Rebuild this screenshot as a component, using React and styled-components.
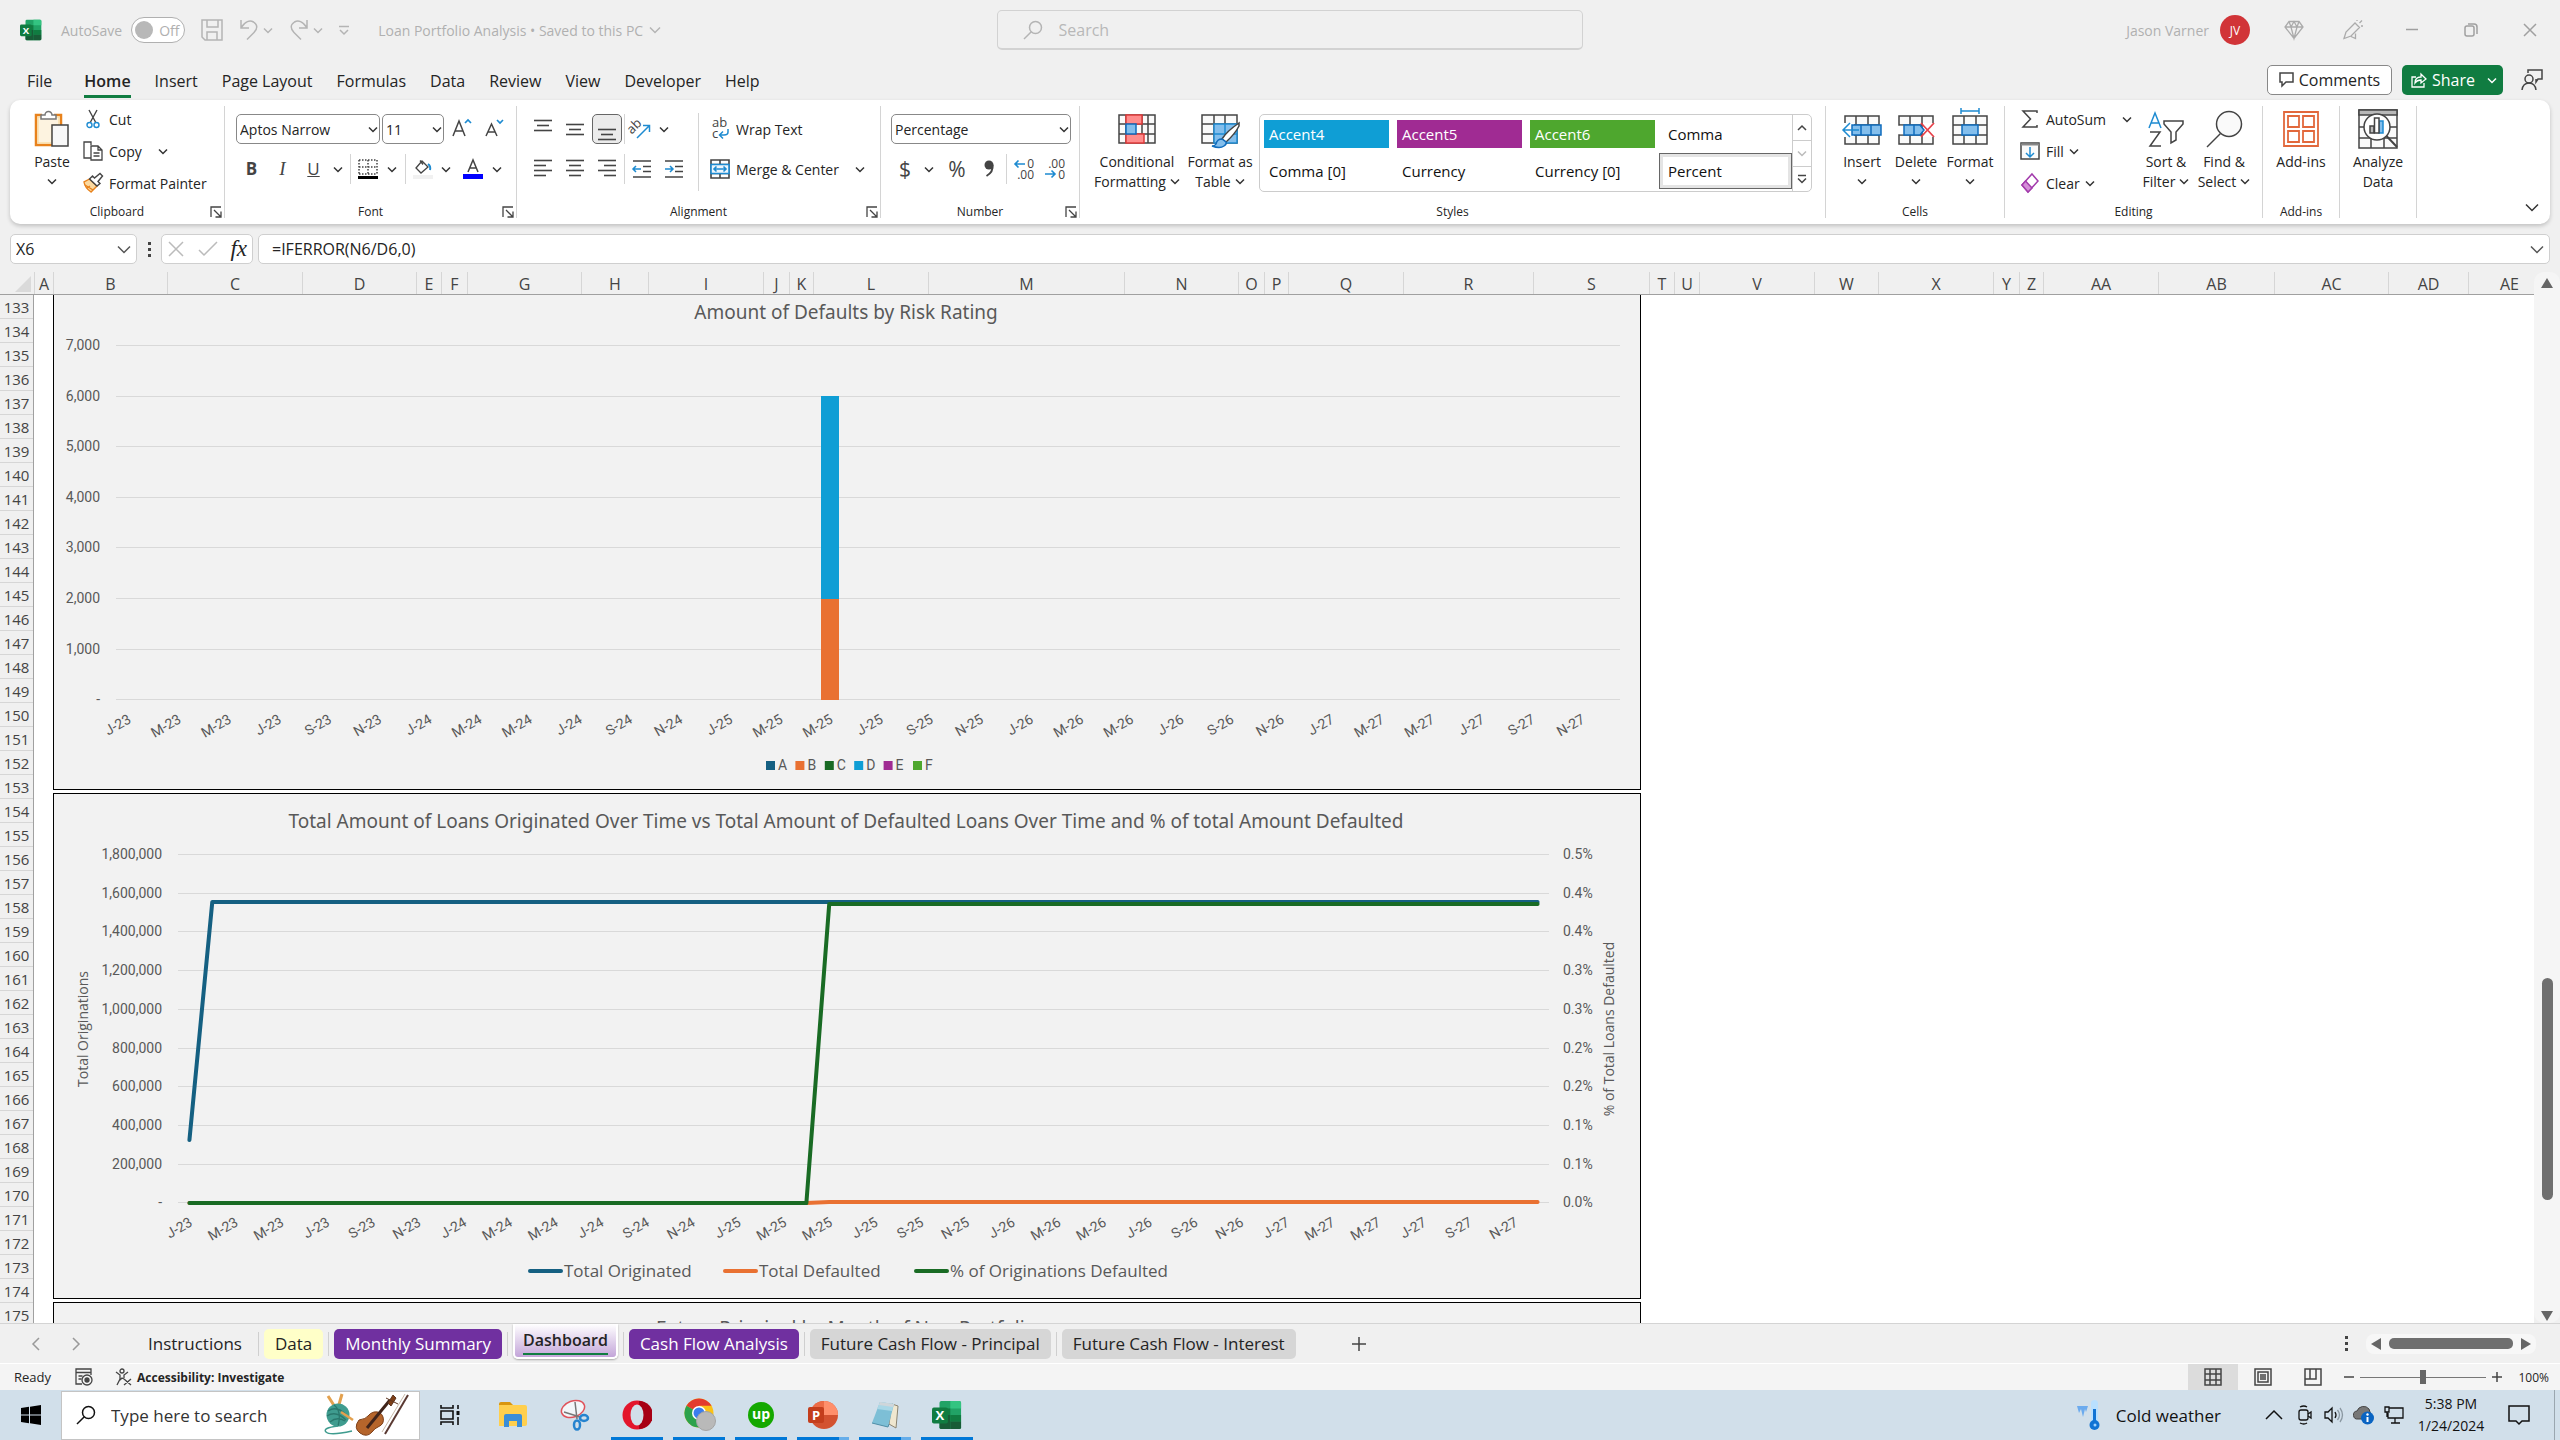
import React, { useState } from 'react';
import styled, { createGlobalStyle } from 'styled-components';

const BLUE = '#1e8bd1';
const INK = '#444';

const columns = [
  ['A', 19], ['B', 114], ['C', 135], ['D', 114], ['E', 25], ['F', 26], ['G', 114], ['H', 67],
  ['I', 115], ['J', 26], ['K', 24], ['L', 115], ['M', 196], ['N', 114], ['O', 26], ['P', 24],
  ['Q', 115], ['R', 130], ['S', 116], ['T', 25], ['U', 25], ['V', 115], ['W', 64], ['X', 115],
  ['Y', 26], ['Z', 24], ['AA', 115], ['AB', 116], ['AC', 114], ['AD', 80], ['AE', 82],
];

const rows = Array.from({ length: 43 }, (_, i) => 133 + i);

const months = [];
['23', '24', '25', '26', '27'].forEach((year) => {
  ['J', 'M', 'M', 'J', 'S', 'N'].forEach((m) => months.push(`${m}-${year}`));
});

const ribbonTabs = ['File', 'Home', 'Insert', 'Page Layout', 'Formulas', 'Data', 'Review', 'View', 'Developer', 'Help'];

const cellStyles = [
  { name: 'Accent4', color: '#0f9ed5' },
  { name: 'Accent5', color: '#a02b93' },
  { name: 'Accent6', color: '#4ea72e' },
  { name: 'Comma' },
  { name: 'Comma [0]' },
  { name: 'Currency' },
  { name: 'Currency [0]' },
  { name: 'Percent', selected: true },
];

const riskLegend = [
  ['A', '#156082'], ['B', '#e97132'], ['C', '#196b24'], ['D', '#0f9ed5'], ['E', '#a02b93'], ['F', '#4ea72e'],
];

/* ---------- icons ---------- */

function Icon({ w = 20, h = 20, stroke = INK, width = 1.5, children }) {
  return (
    <svg width={w} height={h} viewBox={`0 0 ${w} ${h}`} fill="none" stroke={stroke} strokeWidth={width} overflow="visible" aria-hidden="true">
      {children}
    </svg>
  );
}

const Chevron = ({ color = '#333', w = 8 }) => (
  <Icon w={w + 2} h={w / 2 + 3} stroke={color}>
    <path d={`M1 1.5 L${w / 2 + 1} ${w / 2 + 1.5} L${w + 1} 1.5`} />
  </Icon>
);

const ExcelLogo = ({ size = 22 }) => (
  <svg width={size} height={size} viewBox="0 0 32 32" aria-hidden="true">
    <rect x="8" y="1" width="23" height="30" rx="2" fill="#21a366" />
    <path d="M19.500 1h9.500a2 2 0 0 1 2 2v6H19.500z" fill="#33c481" />
    <path d="M8 9h11.500v7H8z" fill="#107c41" />
    <path d="M8 16h11.500v15H10a2 2 0 0 1-2-2z" fill="#185c37" />
    <path d="M19.500 16H31v7H19.500z" fill="#107c41" />
    <path d="M19.500 23H31v6a2 2 0 0 1-2 2h-9.500z" fill="#185c37" />
    <rect x="0" y="8" width="17" height="17" rx="2" fill="#107c41" />
    <text x="8.500" y="21.500" fill="#fff" fontSize="14" fontWeight="700" textAnchor="middle" fontFamily="Open Sans, sans-serif">X</text>
  </svg>
);

const SaveIcon = () => (
  <Icon w={22} h={22} stroke="#b4b4b4">
    <path d="M1 1h20v20H4l-3-3z M6 1v7h11V1 M6 21v-8h10v8" />
  </Icon>
);
const UndoIcon = () => (
  <Icon w={20} h={22} stroke="#b4b4b4">
    <path d="M2 1v8h8 M2 9 C6 2 11 1 14.500 3 C19 6 18.500 10 15 13.500 L8 20.500" />
  </Icon>
);
const RedoIcon = () => (
  <Icon w={20} h={22} stroke="#b4b4b4">
    <path d="M18 1v8h-8 M18 9 C14 2 9 1 5.500 3 C1 6 1.500 10 5 13.500 L12 20.500" />
  </Icon>
);
const SearchIcon = ({ size = 20, color = '#b4b4b4' }) => (
  <svg width={size} height={size} viewBox="0 0 20 20" fill="none" stroke={color} strokeWidth="1.5" aria-hidden="true">
    <circle cx="12.500" cy="7.500" r="6" />
    <path d="M8.300 11.700 L1 19" />
  </svg>
);
const DiamondIcon = () => (
  <Icon w={20} h={20} stroke="#ababab" width={1.3}>
    <path d="M5 1.500h10l4 5.500-9 11.500L1 7z M1 7h18 M5 1.500L7 7l3 11.500L13 7l2-5.500 M7 7l3-5.500L13 7" />
  </Icon>
);
const PenIcon = () => (
  <Icon w={20} h={20} stroke="#ababab" width={1.3}>
    <path d="M1 18.500L3 12 12 3l4.500 4.500L8 16l-7 2.500z M8 16.500l4.500 2v-5 M14 1v-1 M16.500 3L19 .5 M18 6h2" />
  </Icon>
);

const PasteIcon = () => (
  <Icon w={36} h={38}>
    <path d="M8 5H2v30h16" stroke="#e8821c" strokeWidth="2.500" />
    <path d="M20 5h7v11" stroke="#e8821c" strokeWidth="2.500" />
    <path d="M4 7h21v8h-7v18H4z" fill="#fdf3e0" stroke="#f9d58f" strokeWidth="1" />
    <path d="M7 9V5h4a3.500 3.500 0 0 1 7 0h4v4z" fill="#fff" stroke="#777" />
    <rect x="18" y="15" width="16" height="21" fill="#f8f8f8" />
  </Icon>
);
const CutIcon = () => (
  <Icon w={14} h={20} width={1.4}>
    <path d="M3 1l6.500 12 M11 1L4.500 13" />
    <circle cx="3.500" cy="16" r="2.500" stroke={BLUE} />
    <circle cx="10.500" cy="16" r="2.500" stroke={BLUE} />
  </Icon>
);
const CopyIcon = () => (
  <Icon w={20} h={20} width={1.3}>
    <path d="M8 17H1V1h7v3" />
    <path d="M8 5h7l4 4v10H8z M15 5v4h4 M10.500 12h6 M10.500 15h6" />
  </Icon>
);
const PainterIcon = () => (
  <Icon w={20} h={20} width={1.4}>
    <path d="M6.500 6L1 9q1 6 7 10l6-6z" fill="#fbd9a0" stroke="#e8821c" />
    <path d="M2 12l8 5 M4 15l3-2" stroke="#e8821c" />
    <path d="M6.500 6l3-3 2 2 5.500-4.500 2.500 2.500-4.500 5.500 2 2-3 2.500z" fill="#fff" />
  </Icon>
);
const LauncherIcon = () => (
  <Icon w={12} h={12} width={1.3}>
    <path d="M1 11V1h10 M4 4l7 7 M11 5.500V11H5.500" />
  </Icon>
);
const GrowFont = ({ shrink }) => (
  <svg width="22" height="22" viewBox="0 0 22 22" fill="none" aria-hidden="true">
    <path d={shrink ? 'M2 18L7.500 6 13 18 M4 14h7' : 'M2 18L8 3l6 15 M4 13h8'} stroke={INK} strokeWidth="1.500" />
    <path d={shrink ? 'M13 2l3 3 3-3' : 'M14 5l3-3 3 3'} stroke={BLUE} strokeWidth="1.700" />
  </svg>
);
const BordersIcon = () => (
  <Icon w={20} h={20}>
    <path d="M1 1h18 M1 8h18 M1 15h18 M1 1v14 M10 1v14 M19 1v14" strokeDasharray="1.500 1.500" />
    <path d="M0 18.500h20" stroke="#000" strokeWidth="3" />
  </Icon>
);
const FillIcon = () => (
  <Icon w={20} h={20} width={1.3}>
    <path d="M3 9l6-7 6 6-7 6z M7 1.500l3 4" />
    <path d="M15 5q3 2 2 6" stroke={BLUE} strokeWidth="2" />
    <path d="M0 18h20" stroke="#f1f1f1" strokeWidth="4" />
  </Icon>
);
const FontColorIcon = () => (
  <Icon w={20} h={20}>
    <path d="M5 13L10 1l5 12 M7 9h6" />
    <path d="M0 17.500h20" stroke="#00f" strokeWidth="5" />
  </Icon>
);
const Lines = ({ bars, top = 4, h = 28 }) => (
  <Icon w={18} h={h} width={1.6}>
    {bars.map(([a, b], i) => (
      <path key={i} d={`M${a} ${top + i * 5 + 1.5}H${b}`} />
    ))}
  </Icon>
);
const OrientIcon = () => (
  <Icon w={20} h={20}>
    <text x="-2" y="11" transform="rotate(-45 5 10)" fontSize="13" fill={INK} stroke="none">ab</text>
    <path d="M6 19L18 7 M12 6.500h6.500V13" stroke={BLUE} />
  </Icon>
);
const IndentIcon = ({ out }) => (
  <Icon w={20} h={20}>
    <path d="M1 2h18 M11 7.500h8 M11 12.500h8 M1 18h18" />
    <path d={out ? 'M9 10H1 M4 7l-3 3 3 3' : 'M1 10h8 M6 7l3 3-3 3'} stroke={BLUE} />
  </Icon>
);
const WrapIcon = () => (
  <Icon w={20} h={22}>
    <text x="2" y="9" fontSize="13" fill={INK} stroke="none">ab</text>
    <text x="2" y="20" fontSize="13" fill={INK} stroke="none">c</text>
    <path d="M18 11v3q0 3-4 3h-4 M13 13.500L9.500 17l3.500 3.500" stroke={BLUE} />
  </Icon>
);
const MergeIcon = () => (
  <Icon w={20} h={20} width={1.6}>
    <path d="M1 1h18v18H1z M1 5.500h18 M1 14.500h18 M10 1v4 M10 15v4" />
    <path d="M1 5.500h18v9H1z M4 10h12 M6.500 7.500L4 10l2.500 2.500 M13.500 7.500L16 10l-2.500 2.500" stroke={BLUE} fill="#eef6fc" />
  </Icon>
);
const DecimalIcon = ({ less }) => (
  <Icon w={22} h={22} width={1.6}>
    <text x="21" y="10" fontSize="12" textAnchor="end" fill={INK} stroke="none">{less ? '.00' : '0'}</text>
    <text x="21" y="21" fontSize="12" textAnchor="end" fill={INK} stroke="none">{less ? '0' : '.00'}</text>
    <path d={less ? 'M1 16h10 M7.500 12.500L11 16l-3.500 3.500' : 'M12 6H2 M5.500 2.500L2 6l3.500 3.500'} stroke={BLUE} />
  </Icon>
);
const ConditionalIcon = () => (
  <Icon w={38} h={30}>
    <path d="M1 1h36v28H1z M1 10h36 M1 20h36 M8 1v28 M24 1v28 M30 1v28" fill="#fafafa" />
    <path d="M8 1h16v9H8z M8 20h18v9H8z" fill="#ff8c8c" stroke="#e03b3b" />
    <path d="M8 10h10v10H8z" fill="#83beec" stroke="#0f6cbd" />
  </Icon>
);
const FormatTableIcon = () => (
  <Icon w={38} h={34}>
    <path d="M1 3h35v28H1z M1 12h35 M1 22h35 M13 3v28 M24 3v28" fill="#fafafa" />
    <path d="M13 12h23v19H13z" fill="#83beec" stroke={BLUE} />
    <path d="M13 22h23 M24 12v19" stroke={BLUE} />
    <path d="M38 11Q26 19 21 27l4 3Q34 22 38 14z" fill="#fff" />
    <path d="M21 27q-5 0-6 5-1 2-4 2 8 3 12 0 3-2 2-4z" fill="#83beec" stroke="#0f6cbd" />
  </Icon>
);
const CellsIcon = ({ kind }) => (
  <Icon w={40} h={38}>
    <path d="M3 6h34v28H3z M3 15h34 M3 25h34 M14 6v28 M26 6v28" fill="#fafafa" />
    {kind === 'insert' && (
      <>
        <path d="M0 13h12v14H0z" fill="#fff" stroke="none" />
        <path d="M10 15h29v10H10z M19 15v10 M29 15v10" fill="#83beec" stroke="#0f6cbd" />
        <path d="M17 20H2 M8 13l-7 7 7 7" stroke={BLUE} />
      </>
    )}
    {kind === 'delete' && (
      <>
        <path d="M1 15.800h7v8.400H1z M27 13h12v14H27z" fill="#fff" stroke="none" />
        <path d="M8 15h16l4 5-4 5H8z M18 15v10" fill="#83beec" stroke="#0f6cbd" />
        <path d="M25 13l13 14 M38 13L25 27" stroke="#e8424a" strokeWidth="1.800" />
      </>
    )}
    {kind === 'format' && (
      <>
        <path d="M12 15h16v10H12z" fill="#83beec" stroke="#0f6cbd" />
        <path d="M11 1h18 M11 -2v6 M29 -2v6" stroke={BLUE} />
      </>
    )}
  </Icon>
);
const SigmaIcon = () => (
  <Icon w={20} h={20}><path d="M17 4V2H3l7.500 8L3 18h14v-2" /></Icon>
);
const FillDownIcon = () => (
  <Icon w={20} h={20}>
    <path d="M1 2h18v16H1z" fill="#fafafa" />
    <path d="M1 3.500h18" stroke="#888" strokeWidth="2" />
    <path d="M10 6v10 M6 12l4 4 4-4" stroke={BLUE} />
  </Icon>
);
const ClearIcon = () => (
  <Icon w={20} h={20} stroke="#a33bac">
    <path d="M12 1l6 7-10 11-6-7z" fill="#fff" />
    <path d="M5.500 8l6.500 7-4 4-6-7z" fill="#d58fd8" />
  </Icon>
);
const SortIcon = () => (
  <Icon w={38} h={38}>
    <path d="M2 18L8 3l6 15 M4 13h8" stroke={BLUE} />
    <path d="M3 22h10L3 36h11 M17 11h19v3l-7 8v8l-5 3V22l-7-8z" fill="none" />
  </Icon>
);
const FindIcon = () => (
  <Icon w={38} h={38}>
    <circle cx="24" cy="14" r="12.500" fill="#fafafa" />
    <path d="M15.500 23.500L2 37" />
  </Icon>
);
const AddinsIcon = () => (
  <Icon w={38} h={38} stroke="#e2683c" width={1.8}>
    <path d="M2 2h34v34H2z M6 6h11v11H6z M21 6h11v11H21z M6 21h11v11H6z M21 21h11v11H21z" />
  </Icon>
);
const AnalyzeIcon = () => (
  <Icon w={40} h={40}>
    <path d="M1 1h38v38H1z M1 18h38 M1 29h38 M13 29v10 M26 29v10" fill="#fafafa" />
    <path d="M1 1h38v5H1z" fill="#b8b8b8" />
    <circle cx="19" cy="18" r="13" fill="#fff" />
    <path d="M12 17h4v7h-4z" fill="#bbb" />
    <path d="M21 12h4v12h-4z" fill="#83beec" stroke={BLUE} />
    <path d="M16.500 9h4.500v15h-4.500z" fill="#fff" />
    <path d="M28.500 27L39 38" strokeWidth="2" />
  </Icon>
);

/* ---------- charts ---------- */

function RiskChart() {
  const left = 62;
  const right = 1566;
  const ticks = ['7,000', '6,000', '5,000', '4,000', '3,000', '2,000', '1,000', '-'];
  const yOf = (i) => Math.round(50 + i * 50.6);

  return (
    <ChartSvg width="1586" height="494" viewBox="0 0 1586 494" role="img" aria-label="Amount of Defaults by Risk Rating">
      <ChartTitle x="792" y="24">Amount of Defaults by Risk Rating</ChartTitle>
      {ticks.map((t, i) => (
        <g key={t}>
          <GridLine x1={left} x2={right} y1={yOf(i) + 0.5} y2={yOf(i) + 0.5} />
          <AxisText x="46" y={yOf(i) + 5} textAnchor="end">{t}</AxisText>
        </g>
      ))}
      <rect x="767" y="101" width="18" height="203" fill="#0f9ed5" />
      <rect x="767" y="304" width="18" height="101" fill="#e97132" />
      {months.map((m, i) => {
        const x = 78 + (i * (right - left)) / 30;
        return <AxisText key={m + i} x={x} y="427" textAnchor="end" transform={`rotate(-30 ${x} 427)`}>{m}</AxisText>;
      })}
      {riskLegend.map(([name, color], i) => (
        <g key={name}>
          <rect x={712 + i * 29.4} y="466" width="9" height="9" fill={color} />
          <AxisText x={724 + i * 29.4} y="475">{name}</AxisText>
        </g>
      ))}
    </ChartSvg>
  );
}

function OriginationChart() {
  const left = 124;
  const right = 1495;
  const bottom = 409;
  const amounts = ['1,800,000', '1,600,000', '1,400,000', '1,200,000', '1,000,000', '800,000', '600,000', '400,000', '200,000', '-'];
  const percents = ['0.5%', '0.4%', '0.4%', '0.3%', '0.3%', '0.2%', '0.2%', '0.1%', '0.1%', '0.0%'];
  const yOf = (i) => Math.round(60 + i * 38.7);
  const xOf = (month) => left + ((month + 0.5) * (right - left)) / 60;
  const legend = [
    [474, 'Total Originated', '#156082'],
    [669, 'Total Defaulted', '#e97132'],
    [860, '% of Originations Defaulted', '#196b24'],
  ];

  return (
    <ChartSvg width="1586" height="504" viewBox="0 0 1586 504" role="img" aria-label="Loans originated and defaulted over time">
      <ChartTitle x="792" y="34">
        Total Amount of Loans Originated Over Time vs Total Amount of Defaulted Loans Over Time and % of total Amount Defaulted
      </ChartTitle>
      {amounts.map((t, i) => (
        <g key={t}>
          <GridLine x1={left} x2={right} y1={yOf(i) + 0.5} y2={yOf(i) + 0.5} />
          <AxisText x="108" y={yOf(i) + 5} textAnchor="end">{t}</AxisText>
          <AxisText x="1509" y={yOf(i) + 5}>{percents[i]}</AxisText>
        </g>
      ))}
      <AxisTitle x="34" y="235" transform="rotate(-90 34 235)">Total Originations</AxisTitle>
      <AxisTitle x="1560" y="235" transform="rotate(-90 1560 235)">% of Total Loans Defaulted</AxisTitle>
      <SeriesLine stroke="#156082" points={`${xOf(0)},346 ${xOf(1)},108 ${xOf(59)},108`} />
      <SeriesLine stroke="#e97132" points={`${xOf(0)},${bottom} ${xOf(27)},${bottom} ${xOf(28)},408 ${xOf(59)},408`} />
      <SeriesLine stroke="#196b24" points={`${xOf(0)},${bottom} ${xOf(27)},${bottom} ${xOf(28)},110 ${xOf(59)},110`} />
      {months.map((m, i) => {
        const x = xOf(i * 2) + 4;
        return <AxisText key={m + i} x={x} y="431" textAnchor="end" transform={`rotate(-30 ${x} 431)`}>{m}</AxisText>;
      })}
      {legend.map(([x, name, color]) => (
        <g key={name}>
          <SeriesLine stroke={color} points={`${x + 2},477 ${x + 33},477`} />
          <LegendText x={x + 36} y="483">{name}</LegendText>
        </g>
      ))}
    </ChartSvg>
  );
}

/* ---------- ribbon ---------- */

function Combo({ label, value, width }) {
  return (
    <ComboBox $w={width}>
      <select aria-label={label} defaultValue={value}>
        <option>{value}</option>
      </select>
      <Chevron />
    </ComboBox>
  );
}

function Group({ name, width, pad = 0, launcher, children }) {
  return (
    <GroupBox $w={width}>
      <GroupBody $pad={pad}>{children}</GroupBody>
      <GroupName>
        <span>{name}</span>
        {launcher && <LauncherButton aria-label={`${name} settings`}><LauncherIcon /></LauncherButton>}
      </GroupName>
    </GroupBox>
  );
}

function Big({ icon, lines, width, menu, below }) {
  return (
    <BigButton $w={width}>
      <BigIcon>{icon}</BigIcon>
      {lines.map((line, i) => (
        <BigLine key={line}>
          {line}
          {menu && i === lines.length - 1 && <Chevron />}
        </BigLine>
      ))}
      {below && <BigLine><Chevron /></BigLine>}
    </BigButton>
  );
}

function Ribbon() {
  return (
    <RibbonPanel>
      <Group name="Clipboard" width={215} pad={12} launcher>
        <Big icon={<PasteIcon />} lines={['Paste']} width={60} below />
        <Stack>
          <SmallButton><IconSlot><CutIcon /></IconSlot>Cut</SmallButton>
          <SmallButton><IconSlot><CopyIcon /></IconSlot>Copy<MenuMark><Chevron /></MenuMark></SmallButton>
          <SmallButton><IconSlot><PainterIcon /></IconSlot>Format Painter</SmallButton>
        </Stack>
      </Group>

      <Group name="Font" width={292} pad={11} launcher>
        <ToolRows>
          <ToolRow $gap={2}>
            <Combo label="Font" value="Aptos Narrow" width={144} />
            <Combo label="Font size" value="11" width={62} />
            <Tool $w={32} aria-label="Increase font size"><GrowFont /></Tool>
            <Tool $w={30} aria-label="Decrease font size"><GrowFont shrink /></Tool>
          </ToolRow>
          <ToolRow>
            <Tool $w={31}><b>B</b></Tool>
            <Tool $w={31}><SerifItalic>I</SerifItalic></Tool>
            <Tool $w={31}><u>U</u></Tool>
            <Tool $w={18} aria-label="Underline options"><Chevron /></Tool>
            <Divider />
            <Tool $w={28} aria-label="Borders"><BordersIcon /></Tool>
            <Tool $w={20} aria-label="Border options"><Chevron /></Tool>
            <Divider />
            <Tool $w={28} aria-label="Fill color"><FillIcon /></Tool>
            <Tool $w={18} aria-label="Fill color options"><Chevron /></Tool>
            <Tool $w={36} aria-label="Font color"><FontColorIcon /></Tool>
            <Tool $w={12} aria-label="Font color options"><Chevron /></Tool>
          </ToolRow>
        </ToolRows>
      </Group>

      <Group name="Alignment" width={364} pad={11} launcher>
        <ToolRows $w={170}>
          <ToolRow $gap={2}>
            <Tool $w={30} aria-label="Top align"><Lines bars={[[0, 18], [3, 15], [0, 18]]} /></Tool>
            <Tool $w={30} aria-label="Middle align"><Lines top={8} bars={[[0, 18], [3, 15], [0, 18]]} /></Tool>
            <Tool $w={30} $on aria-label="Bottom align"><Lines top={13} bars={[[0, 18], [3, 15], [0, 18]]} /></Tool>
            <Divider $tight />
            <Tool $w={28} aria-label="Orientation"><OrientIcon /></Tool>
            <Tool $w={14} aria-label="Orientation options"><Chevron /></Tool>
          </ToolRow>
          <ToolRow $gap={2}>
            <Tool $w={30} aria-label="Align left"><Lines bars={[[0, 18], [0, 12], [0, 18], [0, 12]]} /></Tool>
            <Tool $w={30} aria-label="Center"><Lines bars={[[0, 18], [3, 15], [0, 18], [3, 15]]} /></Tool>
            <Tool $w={30} aria-label="Align right"><Lines bars={[[0, 18], [6, 18], [0, 18], [6, 18]]} /></Tool>
            <Divider $tight />
            <Tool $w={30} aria-label="Decrease indent"><IndentIcon out /></Tool>
            <Tool $w={30} aria-label="Increase indent"><IndentIcon /></Tool>
          </ToolRow>
        </ToolRows>
        <WrapColumn>
          <SmallButton $h={30}><IconSlot><WrapIcon /></IconSlot>Wrap Text</SmallButton>
          <SmallButton $h={30}><IconSlot><MergeIcon /></IconSlot>Merge &amp; Center<MenuMark><Chevron /></MenuMark></SmallButton>
        </WrapColumn>
      </Group>

      <Group name="Number" width={199} pad={10} launcher>
        <ToolRows>
          <ToolRow><Combo label="Number format" value="Percentage" width={180} /></ToolRow>
          <ToolRow>
            <Tool $w={28} $size={21}>$</Tool>
            <Tool $w={20} aria-label="Currency options"><Chevron /></Tool>
            <Tool $w={36} $size={21}>%</Tool>
            <Tool $w={28} aria-label="Comma style">
              <Icon w={12} h={20}>
                <circle cx="6" cy="6" r="4.500" fill={INK} stroke="none" />
                <path d="M9.500 6q1 7-6 11" strokeWidth="2" />
              </Icon>
            </Tool>
            <Divider />
            <Tool $w={28} aria-label="Increase decimal"><DecimalIcon /></Tool>
            <Tool $w={34} aria-label="Decrease decimal"><DecimalIcon less /></Tool>
          </ToolRow>
        </ToolRows>
      </Group>

      <Group name="Styles" width={746} pad={13}>
        <Big icon={<ConditionalIcon />} lines={['Conditional', 'Formatting']} width={88} menu />
        <Big icon={<FormatTableIcon />} lines={['Format as', 'Table']} width={78} menu />
        <Gallery>
          <GalleryGrid>
            {cellStyles.map((s) => (
              <StyleCell key={s.name} $color={s.color} $selected={s.selected}>{s.name}</StyleCell>
            ))}
          </GalleryGrid>
          <GalleryScroll>
            <button aria-label="Previous styles"><Icon w={10} h={6}><path d="M1 5l4-4 4 4" /></Icon></button>
            <button aria-label="Next styles"><Chevron color="#bbb" /></button>
            <button aria-label="More styles"><Icon w={10} h={10}><path d="M1 1.500h8 M1 4.500l4 4 4-4" /></Icon></button>
          </GalleryScroll>
        </Gallery>
      </Group>

      <Group name="Cells" width={179} pad={9}>
        <Big icon={<CellsIcon kind="insert" />} lines={['Insert']} width={54} below />
        <Big icon={<CellsIcon kind="delete" />} lines={['Delete']} width={54} below />
        <Big icon={<CellsIcon kind="format" />} lines={['Format']} width={54} below />
      </Group>

      <Group name="Editing" width={258} pad={14}>
        <Stack $w={118}>
          <SmallButton><IconSlot><SigmaIcon /></IconSlot>AutoSum<MenuMark><Chevron /></MenuMark></SmallButton>
          <SmallButton><IconSlot><FillDownIcon /></IconSlot>Fill<Chevron /></SmallButton>
          <SmallButton><IconSlot><ClearIcon /></IconSlot>Clear<Chevron /></SmallButton>
        </Stack>
        <Big icon={<SortIcon />} lines={['Sort &', 'Filter']} width={58} menu />
        <Big icon={<FindIcon />} lines={['Find &', 'Select']} width={58} menu />
      </Group>

      <Group name="Add-ins" width={77}>
        <Big icon={<AddinsIcon />} lines={['Add-ins']} width={76} />
      </Group>
      <Group name="" width={77}>
        <Big icon={<AnalyzeIcon />} lines={['Analyze', 'Data']} width={76} />
      </Group>
      <CollapseButton aria-label="Collapse ribbon"><Chevron w={12} /></CollapseButton>
    </RibbonPanel>
  );
}

/* ---------- taskbar ---------- */

const taskIcons = [
  {
    name: 'Task View',
    icon: (
      <Icon w={22} h={22} stroke="#111" width={1.6}>
        <path d="M1 1v3h12V1 M1 7h12v8H1z M1 21v-3h12v3 M18 1v4 M18 13v8" />
        <path d="M18 7v4" strokeWidth="3" />
      </Icon>
    ),
  },
  {
    name: 'File Explorer',
    icon: (
      <svg width="28" height="26" viewBox="0 0 28 26">
        <path d="M0 2q0-2 2-2h9l3 3H0z" fill="#d9960f" />
        <path d="M0 3h26q2 0 2 2v17q0 2-2 2H0z" fill="#ffcf4d" />
        <path d="M5 25V14q0-2 2-2h14q2 0 2 2v11h-5v-6h-8v6z" fill="#3b8ed8" />
      </svg>
    ),
  },
  {
    name: 'Snipping Tool',
    icon: (
      <svg width="30" height="32" viewBox="0 0 30 32" fill="none">
        <ellipse cx="13" cy="10" rx="12" ry="8" transform="rotate(-20 13 10)" fill="#f3f6f9" stroke="#e0525a" strokeWidth="1.500" />
        <path d="M15 3L17 20 M4 13L20 18" stroke="#777" strokeWidth="1.500" />
        <ellipse cx="24" cy="19" rx="4" ry="3" stroke="#2583cf" strokeWidth="2.500" />
        <ellipse cx="17" cy="26" rx="3" ry="4.500" stroke="#2583cf" strokeWidth="2.500" />
      </svg>
    ),
  },
  {
    name: 'Opera',
    open: true,
    icon: (
      <svg width="30" height="30" viewBox="0 0 30 30">
        <ellipse cx="15" cy="15" rx="14.500" ry="14.500" fill="#e3152b" />
        <path d="M17 1a14 14 0 0 1 0 28z" fill="#a70014" />
        <ellipse cx="15" cy="15" rx="6.500" ry="10.500" fill="#d1dfe9" />
      </svg>
    ),
  },
  {
    name: 'Chrome',
    open: true,
    icon: (
      <svg width="34" height="34" viewBox="0 0 34 34">
        <circle cx="17" cy="15" r="14.500" fill="#fbc116" />
        <path d="M17 15L4.500 7.700A14.500 14.500 0 0 1 29.500 7.700H17z" fill="#e33b2e" />
        <path d="M17 15L4.500 7.700A14.500 14.500 0 0 0 17 29.500l6-11z" fill="#2ca24c" />
        <circle cx="17" cy="15" r="7" fill="#fff" />
        <circle cx="17" cy="15" r="5.500" fill="#3b7ded" />
        <circle cx="24" cy="23" r="9.500" fill="#b9b9b9" stroke="#a4a4a4" />
      </svg>
    ),
  },
  {
    name: 'Upwork',
    open: true,
    icon: (
      <svg width="28" height="28" viewBox="0 0 28 28">
        <circle cx="14" cy="14" r="13" fill="#14a800" />
        <text x="14" y="18" textAnchor="middle" fontSize="14" fontWeight="700" fill="#fff">up</text>
      </svg>
    ),
  },
  {
    name: 'PowerPoint',
    open: true,
    more: true,
    icon: (
      <svg width="30" height="30" viewBox="0 0 30 30">
        <circle cx="16" cy="15" r="14" fill="#d35230" />
        <path d="M16 1a14 14 0 0 1 14 14H16z" fill="#ff8f6b" />
        <path d="M16 1a14 14 0 0 0-14 14h14z" fill="#ed6c47" />
        <rect x="0" y="7" width="16" height="16" rx="2" fill="#c43e1c" />
        <text x="8" y="20" textAnchor="middle" fontSize="13" fontWeight="700" fill="#fff">P</text>
      </svg>
    ),
  },
  {
    name: 'Notepad',
    open: true,
    more: true,
    icon: (
      <svg width="30" height="30" viewBox="0 0 30 30">
        <path d="M22 4l6 2-2 22-7-4z" fill="#efe7d0" stroke="#8b8471" />
        <path d="M10 2l14 2-6 23L2 23z" fill="#7dbfd6" />
        <path d="M10 2l14 2-2 7L7 9z" fill="#a9d7e6" />
        <path d="M10 2l14 2-1 3L9 5z" fill="#cfd6da" />
        <path d="M2 23l16 4 1-3" stroke="#4f8ea6" fill="none" />
      </svg>
    ),
  },
  { name: 'Excel', open: true, icon: <ExcelLogo size={30} /> },
];

const SearchArt = () => (
  <svg width="88" height="44" viewBox="0 0 88 44" fill="none" aria-hidden="true">
    <path d="M4 3l14 22 M18 1L12 22" stroke="#e3a14f" strokeWidth="3" />
    <circle cx="14" cy="22" r="11.500" fill="#3f9c8f" />
    <path d="M4 18q9-6 18 4 M3 23q9-6 19 4 M6 29q7-6 15-1 M10 12q8 6 4 21" stroke="#2a786d" strokeWidth="1.300" />
    <path d="M14 33q-16 2-12 6t26-1" stroke="#3f9c8f" strokeWidth="1.500" />
    <path d="M17 19l12 8" stroke="#e3a14f" strokeWidth="2.500" />
    <path d="M35 27q-6 8 1 13 7 5 12-1 3-4 6-5 7-3 5-10-2-6-9-5-4 1-6 4-2 3-9 4z" fill="#b5652b" stroke="#7e3f17" />
    <path d="M43 35L66 7" stroke="#40241a" strokeWidth="3" />
    <path d="M64 10l5-8 3 3-5 8z M62 5l12 6" fill="#7e3f17" stroke="#5d3520" />
    <path d="M84 2L61 41" stroke="#5a3932" strokeWidth="2" />
    <path d="M81 1L58 39" stroke="#c9b9a8" />
  </svg>
);

function Taskbar() {
  return (
    <TaskbarStrip>
      <StartButton aria-label="Start">
        <svg width="20" height="20" viewBox="0 0 20 20" fill="#000">
          <path d="M0 3l8-1.200V9.500H0z M9 1.700L20 0v9.500H9z M0 10.500h8v7.700L0 17z M9 10.500h11V20L9 18.300z" />
        </svg>
      </StartButton>
      <TaskSearch>
        <SearchIcon color="#111" />
        <input type="text" aria-label="Search Windows" placeholder="Type here to search" />
        <SearchArt />
      </TaskSearch>
      {taskIcons.map((t) => (
        <TaskButton key={t.name} aria-label={t.name} $open={t.open} $more={t.more}>{t.icon}</TaskButton>
      ))}
      <Grow />
      <Weather>
        <svg width="24" height="34" viewBox="0 0 24 34">
          <path d="M0 8h11l-2 6-1-3-2 8-2-8-2 4z" fill="#6cabee" />
          <rect x="14" y="2" width="7" height="24" rx="3.500" fill="#b9e0ff" />
          <rect x="16" y="11" width="3" height="14" fill="#1173d4" />
          <circle cx="17.500" cy="27" r="5" fill="#1173d4" />
          <circle cx="18" cy="27" r="1.500" fill="#9fd2ff" />
        </svg>
        Cold weather
      </Weather>
      <Tray>
        <TrayButton aria-label="Hidden icons">
          <Icon w={18} h={10} stroke="#111"><path d="M1 9l8-8 8 8" /></Icon>
        </TrayButton>
        <TrayButton aria-label="Camera">
          <Icon w={18} h={20} stroke="#111" width={1.3}>
            <rect x="4" y="5" width="9" height="10" rx="2" />
            <path d="M13 9l3-2v6l-3-2 M5 2q4-2 7 0 M5 18q4 2 7 0" />
          </Icon>
        </TrayButton>
        <TrayButton aria-label="Volume">
          <Icon w={20} h={18} stroke="#111" width={1.3}>
            <path d="M1 6v6h3l4 4V2L4 6z M11 6q2 3 0 6" />
            <path d="M13.500 4q4 5 0 10 M16 2q5 7 0 14" stroke="#8b98a2" />
          </Icon>
        </TrayButton>
        <TrayButton aria-label="OneDrive">
          <svg width="22" height="20" viewBox="0 0 22 20">
            <path d="M5 14a4 4 0 0 1-1-8 7 7 0 0 1 12-2l2 6-8 4z" fill="#777" stroke="#444" />
            <circle cx="14.500" cy="13" r="6.500" fill="#0a64c2" />
            <path d="M14.500 12v5" stroke="#fff" strokeWidth="2" />
            <circle cx="14.500" cy="9.500" r="1.200" fill="#fff" />
          </svg>
        </TrayButton>
        <TrayButton aria-label="Network">
          <Icon w={20} h={20} stroke="#111" width={1.3}>
            <path d="M5 3h14v10H4V8 M11 13v5 M7 18h9 M1 2h4v5H1z M3 7v5" />
          </Icon>
        </TrayButton>
      </Tray>
      <Clock>
        <span>5:38 PM</span>
        <span>1/24/2024</span>
      </Clock>
      <Notify aria-label="Notifications">
        <Icon w={22} h={22} stroke="#111"><path d="M1 2h20v15h-7l-3 3-3-3H1z" /></Icon>
      </Notify>
    </TaskbarStrip>
  );
}

/* ---------- page ---------- */

function App() {
  const [autoSave, setAutoSave] = useState(false);
  const [formula, setFormula] = useState('=IFERROR(N6/D6,0)');
  const [zoom, setZoom] = useState(50);

  return (
    <Window>
      <GlobalStyle />
      <TitleBar>
        <TitleLeft>
          <ExcelLogo />
          <AutoSave>
            AutoSave
            <input type="checkbox" checked={autoSave} onChange={(e) => setAutoSave(e.target.checked)} />
            <Switch><i />{autoSave ? 'On' : 'Off'}</Switch>
          </AutoSave>
          <QuickButton aria-label="Save"><SaveIcon /></QuickButton>
          <QuickButton aria-label="Undo"><UndoIcon /><Chevron color="#b4b4b4" /></QuickButton>
          <QuickButton aria-label="Redo"><RedoIcon /><Chevron color="#b4b4b4" /></QuickButton>
          <QuickButton aria-label="Customize toolbar">
            <Icon w={10} h={10} stroke="#b4b4b4"><path d="M0 1.500h10 M1 5l4 4 4-4" /></Icon>
          </QuickButton>
          <DocName>Loan Portfolio Analysis • Saved to this PC <Chevron color="#b4b4b4" w={10} /></DocName>
        </TitleLeft>
        <SearchBox>
          <SearchIcon />
          <input type="text" aria-label="Search" placeholder="Search" />
        </SearchBox>
        <TitleRight>
          <span>Jason Varner</span>
          <Avatar>JV</Avatar>
          <WindowButton aria-label="Premium"><DiamondIcon /></WindowButton>
          <WindowButton aria-label="Coming soon"><PenIcon /></WindowButton>
          <WindowButton aria-label="Minimize"><Icon w={12} h={12} stroke="#a0a0a0"><path d="M0 5.500h12" /></Icon></WindowButton>
          <WindowButton aria-label="Restore">
            <Icon w={14} h={14} stroke="#a0a0a0"><rect x="1" y="3" width="9" height="10" rx="2" /><path d="M4 1h6q3 0 3 3v7" /></Icon>
          </WindowButton>
          <WindowButton aria-label="Close"><Icon w={14} h={14} stroke="#a0a0a0"><path d="M1 1l12 12 M13 1L1 13" /></Icon></WindowButton>
        </TitleRight>
      </TitleBar>

      <TabRow>
        {ribbonTabs.map((t) => (
          <RibbonTab key={t} href="#" $active={t === 'Home'}>{t}</RibbonTab>
        ))}
        <Grow />
        <CommentsButton>
          <Icon w={16} h={16}><path d="M1 1h13v9H7l-4 4v-4H1z" /></Icon>
          Comments
        </CommentsButton>
        <ShareButton>
          <Icon w={16} h={16} stroke="#fff" width={1.3}><path d="M5 5H1v10h12v-4 M4 11q0-6 6-6V2l5 5-5 4V8q-4 0-6 3z" /></Icon>
          Share
          <Chevron color="#fff" />
        </ShareButton>
        <PresenceButton aria-label="Catch up">
          <Icon w={22} h={22}><circle cx="8" cy="10" r="4" /><path d="M1 21q1-7 7-7t7 7 M7 4V1h14v9h-4l-2 3v-3" /></Icon>
        </PresenceButton>
      </TabRow>

      <Ribbon />

      <FormulaRow>
        <NameBox>
          <input type="text" aria-label="Name box" defaultValue="X6" />
          <Chevron w={12} color="#555" />
        </NameBox>
        <Dots aria-hidden="true"><i /><i /><i /></Dots>
        <FxBox>
          <button aria-label="Cancel"><Icon w={18} h={16} stroke="#bbb"><path d="M2 1l14 14 M16 1L2 15" /></Icon></button>
          <button aria-label="Enter"><Icon w={20} h={16} stroke="#bbb"><path d="M1 9l5 5L19 1" /></Icon></button>
          <button><Fx>fx</Fx></button>
        </FxBox>
        <FormulaBox>
          <input type="text" aria-label="Formula" value={formula} onChange={(e) => setFormula(e.target.value)} />
          <Chevron w={12} color="#555" />
        </FormulaBox>
      </FormulaRow>

      <SheetArea>
        <Sheet>
          <ColumnHeads>
            <Corner><Icon w={18} h={18} stroke="none"><path d="M17 1v16H1z" fill="#dadada" /></Icon></Corner>
            {columns.map(([name, w]) => <ColumnHead key={name} $w={w}>{name}</ColumnHead>)}
          </ColumnHeads>
          <SheetBody>
            <RowHeads>
              {rows.map((r) => <RowHead key={r}>{r}</RowHead>)}
            </RowHeads>
            <Charts>
              <ChartFrame $cutTop><RiskChart /></ChartFrame>
              <ChartFrame><OriginationChart /></ChartFrame>
              <ChartFrame>
                <ChartSvg width="1586" height="120" viewBox="0 0 1586 120">
                  <ChartTitle x="792" y="32">Future Principal by Month of New Portfolio</ChartTitle>
                </ChartSvg>
              </ChartFrame>
            </Charts>
          </SheetBody>
        </Sheet>
        <VerticalScroll>
          <Icon w={12} h={10} stroke="none"><path d="M6 0l6 10H0z" fill="#666" /></Icon>
          <ScrollTrack><ScrollThumb /></ScrollTrack>
          <Icon w={12} h={10} stroke="none"><path d="M6 10L0 0h12z" fill="#666" /></Icon>
        </VerticalScroll>
      </SheetArea>

      <SheetTabs>
        <NavArrows>
          <button aria-label="Previous sheet"><Icon w={8} h={14} stroke="#999"><path d="M7 1L1 7l6 6" /></Icon></button>
          <button aria-label="Next sheet"><Icon w={8} h={14} stroke="#999"><path d="M1 1l6 6-6 6" /></Icon></button>
        </NavArrows>
        <SheetTab>Instructions</SheetTab>
        <TabLine />
        <SheetTab $bg="#ffffc8">Data</SheetTab>
        <TabLine />
        <SheetTab $bg="#7030a0" $color="#fff">Monthly Summary</SheetTab>
        <TabLine />
        <ActiveTab><span>Dashboard</span></ActiveTab>
        <TabLine />
        <SheetTab $bg="#7030a0" $color="#fff">Cash Flow Analysis</SheetTab>
        <TabLine />
        <SheetTab $bg="#d6d6d6">Future Cash Flow - Principal</SheetTab>
        <TabLine />
        <SheetTab $bg="#d6d6d6">Future Cash Flow - Interest</SheetTab>
        <AddSheet aria-label="New sheet"><Icon w={16} h={16}><path d="M8 1v14 M1 8h14" /></Icon></AddSheet>
        <Grow />
        <Dots aria-hidden="true"><i /><i /><i /></Dots>
        <HorizontalScroll>
          <Icon w={10} h={12} stroke="none"><path d="M0 6l10-6v12z" fill="#666" /></Icon>
          <i />
          <Icon w={10} h={12} stroke="none"><path d="M10 6L0 0v12z" fill="#666" /></Icon>
        </HorizontalScroll>
      </SheetTabs>

      <StatusBar>
        <span>Ready</span>
        <Icon w={18} h={18} width={1.3}>
          <path d="M7 16H1V1h15v6 M1 4.500h15 M3.500 8h4 M3.500 11h3" />
          <circle cx="12" cy="12" r="5" /><circle cx="12" cy="12" r="2" fill={INK} />
        </Icon>
        <Access>
          <Icon w={18} h={18} width={1.3}>
            <circle cx="7" cy="3" r="2" />
            <path d="M1 4l4 3v4l-3 6 M13 4L9 7v3 M5 12l2-2 2 1 M9 11l7 6 M16 11l-7 6" />
          </Icon>
          Accessibility: Investigate
        </Access>
        <Grow />
        <ViewButton $active aria-label="Normal view">
          <Icon w={18} h={18}><path d="M1 1h16v16H1z M1 6h16 M1 12h16 M6 1v16 M12 1v16" /></Icon>
        </ViewButton>
        <ViewButton aria-label="Page layout view">
          <Icon w={18} h={18}><path d="M1 1h16v16H1z M4 4h10v10H4z M6 7h6 M6 9h6 M6 11h6" /></Icon>
        </ViewButton>
        <ViewButton aria-label="Page break view">
          <Icon w={18} h={18}><path d="M1 1h16v16H1z M1 11h11V1 M6 1v10" /></Icon>
        </ViewButton>
        <ZoomButton aria-label="Zoom out"><Icon w={10} h={10}><path d="M0 5h10" /></Icon></ZoomButton>
        <ZoomSlider type="range" aria-label="Zoom" min="0" max="100" value={zoom} onChange={(e) => setZoom(e.target.value)} />
        <ZoomButton aria-label="Zoom in"><Icon w={10} h={10}><path d="M0 5h10 M5 0v10" /></Icon></ZoomButton>
        <ZoomValue>100%</ZoomValue>
      </StatusBar>

      <Taskbar />
    </Window>
  );
}

const GlobalStyle = createGlobalStyle`
  body {
    margin: 0;
    font-family: 'Open Sans', 'Noto Sans', sans-serif;
    font-size: 14px;
    color: #242424;
    background: #f0f0f0;
  }

  * {
    box-sizing: border-box;
  }

  svg {
    display: block;
    flex: none;
  }

  button,
  input,
  select {
    font: inherit;
    color: inherit;
    border: none;
    background: none;
    padding: 0;
    margin: 0;
    outline: none;
  }
`;

const Window = styled.div`
  display: flex;
  flex-direction: column;
  height: 100vh;
  overflow: hidden;
  background: #f0f0f0;
`;

const Grow = styled.div`
  flex: 1;
`;

const TitleBar = styled.header`
  display: grid;
  grid-template-columns: 1fr 586px 1fr;
  align-items: center;
  height: 60px;
  flex: none;
  padding: 0 1px 0 20px;
  color: #b0b0b0;
`;

const TitleLeft = styled.div`
  display: flex;
  align-items: center;
  gap: 16px;
  white-space: nowrap;
`;

const AutoSave = styled.label`
  display: flex;
  align-items: center;
  gap: 9px;
  margin-left: 3px;

  input {
    position: absolute;
    opacity: 0;
  }
`;

const Switch = styled.span`
  display: flex;
  align-items: center;
  gap: 6px;
  width: 54px;
  height: 26px;
  padding-left: 3px;
  border: 1px solid #b0b0b0;
  border-radius: 13px;
  background: #fff;

  i {
    width: 18px;
    height: 18px;
    border-radius: 50%;
    background: #b8b8b8;
  }
`;

const QuickButton = styled.button`
  display: flex;
  align-items: center;
  gap: 4px;
`;

const DocName = styled.div`
  display: flex;
  align-items: center;
  gap: 6px;
  margin-left: 13px;
`;

const SearchBox = styled.div`
  display: flex;
  align-items: center;
  gap: 16px;
  height: 40px;
  padding-left: 25px;
  border: 1px solid #d2d2d2;
  border-bottom-width: 2px;
  border-radius: 5px;
  font-size: 16px;

  input {
    flex: 1;
  }

  input::placeholder {
    color: #b8b8b8;
  }
`;

const TitleRight = styled.div`
  display: flex;
  align-items: center;
  justify-content: flex-end;
`;

const Avatar = styled.span`
  display: grid;
  place-items: center;
  width: 30px;
  height: 30px;
  margin: 0 14px 0 11px;
  border-radius: 50%;
  background: #d13438;
  color: #fff;
  font-size: 12px;
`;

const WindowButton = styled.button`
  display: grid;
  place-items: center;
  width: 59px;
  height: 40px;
`;

const TabRow = styled.nav`
  display: flex;
  align-items: center;
  height: 40px;
  flex: none;
  padding: 0 17px 0 15px;
  font-size: 16px;
`;

const RibbonTab = styled.a`
  margin: 0 12px;
  line-height: 28px;
  padding: 5px 0 0;
  color: #242424;
  text-decoration: none;
  font-weight: ${(p) => (p.$active ? 600 : 400)};
  border-bottom: 3px solid ${(p) => (p.$active ? '#107c41' : 'transparent')};

  &:first-child {
    margin-right: 20px;
  }
`;

const CommentsButton = styled.button`
  display: flex;
  align-items: center;
  justify-content: center;
  gap: 4px;
  width: 125px;
  height: 30px;
  border: 1px solid #888;
  border-radius: 5px;
  background: #fff;
`;

const ShareButton = styled.button`
  display: flex;
  align-items: center;
  gap: 5px;
  width: 101px;
  height: 30px;
  margin: 0 18px 0 10px;
  padding: 0 6px 0 9px;
  border-radius: 5px;
  background: #107c41;
  color: #fff;
  font-weight: 500;

  svg:last-child {
    margin-left: auto;
  }
`;

const PresenceButton = styled.button`
  width: 22px;
`;

const RibbonPanel = styled.section`
  display: flex;
  height: 124px;
  flex: none;
  margin: 0 10px;
  padding: 6px 0 4px;
  border-radius: 10px;
  background: #fff;
  box-shadow: 0 2px 4px rgba(0, 0, 0, 0.2);
`;

const GroupBox = styled.div`
  display: grid;
  grid-template-rows: 98px 14px;
  align-self: flex-start;
  width: ${(p) => p.$w}px;
  flex: none;
  border-right: 1px solid #d4d4d4;
`;

const GroupBody = styled.div`
  display: flex;
  align-items: flex-start;
  padding-left: ${(p) => p.$pad}px;
`;

const GroupName = styled.div`
  display: grid;
  grid-template-columns: 14px 1fr 14px;
  align-items: center;
  line-height: 16px;
  font-size: 12px;
  text-align: center;

  span {
    grid-column: 2;
  }
`;

const LauncherButton = styled.button`
  height: 12px;
`;

const Stack = styled.div`
  display: flex;
  flex-direction: column;
  gap: 6px;
  width: ${(p) => (p.$w ? `${p.$w}px` : 'auto')};
`;

const SmallButton = styled.button`
  display: flex;
  align-items: center;
  gap: 5px;
  height: ${(p) => p.$h || 26}px;
  white-space: nowrap;
`;

const IconSlot = styled.span`
  display: grid;
  place-items: center;
  width: 22px;
`;

const MenuMark = styled.span`
  margin-left: 11px;
`;

const ToolRows = styled.div`
  display: flex;
  flex-direction: column;
  gap: 10px;
  padding-top: 8px;
  width: ${(p) => (p.$w ? `${p.$w}px` : 'auto')};
`;

const ToolRow = styled.div`
  display: flex;
  align-items: center;
  height: 30px;
  gap: ${(p) => p.$gap || 0}px;
`;

const Tool = styled.button`
  display: grid;
  place-items: center;
  width: ${(p) => p.$w}px;
  height: 30px;
  font-size: ${(p) => p.$size || 17}px;
  line-height: 28px;
  color: #444;
  border: 1px solid ${(p) => (p.$on ? '#666' : 'transparent')};
  border-radius: 5px;
  background: ${(p) => (p.$on ? '#ebebeb' : 'none')};
`;

const SerifItalic = styled.i`
  font-family: 'Liberation Serif', serif;
  font-size: 19px;
`;

const Divider = styled.span`
  width: 1px;
  height: 30px;
  margin: 0 ${(p) => (p.$tight ? 0 : 3)}px;
  background: #d4d4d4;
`;

const ComboBox = styled.div`
  position: relative;
  width: ${(p) => p.$w}px;

  select {
    appearance: none;
    width: 100%;
    height: 30px;
    padding-left: 3px;
    border: 1px solid #888;
    border-radius: 5px;
    background: #fff;
  }

  svg {
    position: absolute;
    right: 2px;
    top: 12px;
    pointer-events: none;
  }
`;

const WrapColumn = styled.div`
  display: flex;
  flex-direction: column;
  gap: 10px;
  margin-top: 7px;
  padding: 1px 0 7px 10px;
  border-left: 1px solid #d4d4d4;
`;

const BigButton = styled.button`
  display: flex;
  flex-direction: column;
  align-items: center;
  width: ${(p) => p.$w}px;
`;

const BigIcon = styled.span`
  display: grid;
  place-items: center;
  height: 45px;
`;

const BigLine = styled.span`
  display: flex;
  align-items: center;
  gap: 4px;
  height: 20px;
  white-space: nowrap;
`;

const Gallery = styled.div`
  display: flex;
  margin-top: 8px;
  height: 78px;
  border: 1px solid #ccc;
  border-radius: 5px;
  overflow: hidden;
`;

const GalleryGrid = styled.div`
  display: grid;
  grid-template-columns: repeat(4, 133px);
  grid-template-rows: 38px 36px;
`;

const StyleCell = styled.button`
  padding-left: ${(p) => (p.$selected ? 8 : 5)}px;
  border: solid ${(p) => (p.$selected ? '#666' : 'transparent')};
  border-width: ${(p) => (p.$selected ? '1px' : '5px 4px')};
  background: ${(p) => p.$color || '#fff'};
  background-clip: padding-box;
  box-shadow: ${(p) => (p.$selected ? 'inset 0 0 0 3px #e4e4e4' : 'none')};
  color: ${(p) => (p.$color ? '#fff' : '#111')};
  font-size: 15px;
  text-align: left;
`;

const GalleryScroll = styled.div`
  display: grid;
  grid-template-rows: repeat(3, 1fr);
  width: 19px;
  border-left: 1px solid #ccc;

  button {
    display: grid;
    place-items: center;
  }

  button + button {
    border-top: 1px solid #ccc;
  }
`;

const CollapseButton = styled.button`
  align-self: flex-end;
  margin: 0 11px 8px auto;
`;

const FormulaRow = styled.section`
  display: flex;
  height: 30px;
  flex: none;
  margin: 10px 10px 0;
  font-size: 16px;
`;

const FieldBox = styled.div`
  display: flex;
  align-items: center;
  border: 1px solid #cfcfcf;
  border-radius: 5px;
  background: #fff;
  padding: 0 5px;

  input {
    flex: 1;
    min-width: 0;
  }
`;

const NameBox = styled(FieldBox)`
  width: 127px;
`;

const FormulaBox = styled(FieldBox)`
  flex: 1;
  padding-left: 13px;
`;

const Dots = styled.span`
  display: flex;
  flex-direction: column;
  align-items: center;
  justify-content: center;
  gap: 3px;
  width: 24px;

  i {
    width: 3px;
    height: 3px;
    background: #444;
  }
`;

const FxBox = styled(FieldBox)`
  justify-content: space-between;
  width: 92px;
  margin-right: 5px;
`;

const Fx = styled.i`
  font-family: 'Liberation Serif', serif;
  font-size: 23px;
  line-height: 24px;
`;

const SheetArea = styled.main`
  display: grid;
  grid-template-columns: minmax(0, 1fr) 26px;
  flex: 1;
  min-height: 0;
`;

const Sheet = styled.div`
  display: flex;
  flex-direction: column;
  min-height: 0;
  overflow: hidden;
`;

const ColumnHeads = styled.div`
  display: flex;
  height: 31px;
  flex: none;
  padding-top: 8px;
  border-bottom: 1px solid #a0a0a0;
`;

const Corner = styled.div`
  width: 34px;
  flex: none;
  padding: 3px 0 0 14px;
`;

const ColumnHead = styled.div`
  width: ${(p) => p.$w}px;
  flex: none;
  border-left: 1px solid #d6d6d6;
  color: #444;
  font-size: 16px;
  line-height: 24px;
  text-align: center;
`;

const SheetBody = styled.div`
  display: flex;
  flex: 1;
  min-height: 0;
  overflow: hidden;
  background: #fff;
`;

const RowHeads = styled.div`
  width: 34px;
  flex: none;
  border-right: 1px solid #a0a0a0;
  background: #f0f0f0;
`;

const RowHead = styled.div`
  height: 24px;
  border-bottom: 1px solid #d6d6d6;
  color: #444;
  font-size: 15px;
  line-height: 24px;
  text-align: center;
`;

const Charts = styled.div`
  display: flex;
  flex-direction: column;
  gap: 3px;
  padding-left: 19px;
`;

const ChartFrame = styled.figure`
  margin: 0;
  border: 1px solid #000;
  border-top-width: ${(p) => (p.$cutTop ? 0 : 1)}px;
  background: #f2f2f2;
`;

const ChartSvg = styled.svg`
  font-family: Roboto, 'Open Sans', sans-serif;
`;

const ChartTitle = styled.text`
  font-family: 'Noto Sans', 'Open Sans', sans-serif;
  font-size: 19px;
  fill: #595959;
  text-anchor: middle;
`;

const AxisText = styled.text`
  font-size: 14px;
  fill: #595959;
`;

const AxisTitle = styled.text`
  font-family: 'Open Sans', sans-serif;
  font-size: 14px;
  fill: #595959;
  text-anchor: middle;
`;

const LegendText = styled.text`
  font-family: 'Open Sans', sans-serif;
  font-size: 17px;
  fill: #595959;
`;

const GridLine = styled.line`
  stroke: #d9d9d9;
`;

const SeriesLine = styled.polyline`
  fill: none;
  stroke-width: 4;
  stroke-linecap: round;
  stroke-linejoin: round;
`;

const VerticalScroll = styled.div`
  display: flex;
  flex-direction: column;
  align-items: center;
  margin-top: 8px;
  padding: 6px 0 2px;
  border-radius: 10px;
  background: #f5f5f5;
`;

const ScrollTrack = styled.div`
  display: flex;
  flex-direction: column;
  flex: 1;
  width: 11px;

  &::before {
    content: '';
    flex: 690 0 0;
  }

  &::after {
    content: '';
    flex: 111 0 0;
  }
`;

const ScrollThumb = styled.div`
  flex: 222 0 0;
  border-radius: 6px;
  background: #6f6f6f;
`;

const SheetTabs = styled.section`
  display: flex;
  align-items: center;
  height: 40px;
  flex: none;
  padding-right: 24px;
  border-top: 1px solid #d4d4d4;
  font-size: 17px;
`;

const NavArrows = styled.div`
  display: flex;
  gap: 32px;
  width: 132px;
  padding-left: 32px;
`;

const SheetTab = styled.button`
  height: 30px;
  margin: 0 5px;
  padding: 0 11px;
  border-radius: 5px;
  background: ${(p) => p.$bg || 'none'};
  color: ${(p) => p.$color || '#242424'};
  white-space: nowrap;
`;

const ActiveTab = styled.button`
  align-self: flex-start;
  height: 35px;
  margin: 0 5px;
  padding: 2px 8px;
  border: solid #fff;
  border-width: 0 2px 2px;
  border-radius: 0 0 5px 5px;
  background: linear-gradient(#fff, #c3a5d9);
  box-shadow: 0 1px 2px rgba(0, 0, 0, 0.3);
  font-size: 16px;
  font-weight: 600;

  span {
    display: block;
    line-height: 26px;
    border-bottom: 2px solid #107c41;
  }
`;

const TabLine = styled.i`
  width: 1px;
  height: 24px;
  background: #cfcfcf;
`;

const AddSheet = styled.button`
  margin-left: 50px;
`;

const HorizontalScroll = styled.div`
  display: flex;
  align-items: center;
  justify-content: space-between;
  width: 170px;
  height: 20px;
  margin-left: 8px;
  padding: 0 5px;
  border-radius: 8px;
  background: #f7f7f7;

  i {
    width: 124px;
    height: 11px;
    border-radius: 5px;
    background: #6f6f6f;
  }
`;

const StatusBar = styled.footer`
  display: flex;
  align-items: center;
  gap: 0;
  height: 27px;
  flex: none;
  padding: 0 11px 0 14px;
  border-top: 1px solid #fff;
  background: #f4f4f4;
  font-size: 13px;

  & > span {
    margin-right: 24px;
  }
`;

const Access = styled.div`
  display: flex;
  align-items: center;
  gap: 4px;
  margin-left: 22px;
  font-size: 12px;
  font-weight: 700;
`;

const ViewButton = styled.button`
  display: grid;
  place-items: center;
  width: 50px;
  height: 26px;
  background: ${(p) => (p.$active ? '#dcdcdc' : 'none')};
`;

const ZoomButton = styled.button`
  display: grid;
  place-items: center;
  width: 22px;
`;

const ZoomSlider = styled.input`
  appearance: none;
  width: 126px;
  height: 14px;
  background: linear-gradient(#777, #777) center / 100% 1px no-repeat;

  &::-webkit-slider-thumb {
    appearance: none;
    width: 6px;
    height: 14px;
    background: #666;
  }
`;

const ZoomValue = styled.div`
  margin-left: 10px;
  font-size: 12px;
`;

const TaskbarStrip = styled.section`
  display: flex;
  align-items: center;
  height: 50px;
  flex: none;
  background: #d1dfea;
`;

const StartButton = styled.button`
  display: grid;
  place-items: center;
  width: 61px;
  height: 50px;
`;

const TaskSearch = styled.div`
  display: flex;
  align-items: center;
  gap: 15px;
  width: 359px;
  height: 49px;
  padding: 0 7px 0 14px;
  border: 1px solid #c4c4c4;
  background: #fff;
  font-size: 17px;

  input {
    flex: 1;
    min-width: 0;
  }

  input::placeholder {
    color: #333;
  }
`;

const TaskButton = styled.button`
  display: grid;
  place-items: center;
  width: 52px;
  height: 50px;
  margin: 0 5px;
  border-bottom: 3px solid ${(p) => (p.$open ? '#0078d7' : 'transparent')};
  border-image: ${(p) => (p.$more ? 'linear-gradient(90deg, #0078d7 80%, #66aeea 80%) 1' : 'none')};
  padding-top: 3px;
`;

const Weather = styled.div`
  display: flex;
  align-items: center;
  gap: 15px;
  font-size: 17px;
  color: #111;
`;

const Tray = styled.div`
  display: flex;
  margin-left: 38px;
`;

const TrayButton = styled.button`
  display: grid;
  place-items: center;
  width: 30px;
  height: 50px;
`;

const Clock = styled.time`
  display: flex;
  flex-direction: column;
  align-items: center;
  width: 84px;
  color: #111;
  line-height: 22px;
`;

const Notify = styled.button`
  display: grid;
  place-items: center;
  width: 62px;
  height: 50px;
  margin-right: 5px;
  padding-right: 10px;
  border-right: 1px solid #9aa6af;
`;

export default App;
